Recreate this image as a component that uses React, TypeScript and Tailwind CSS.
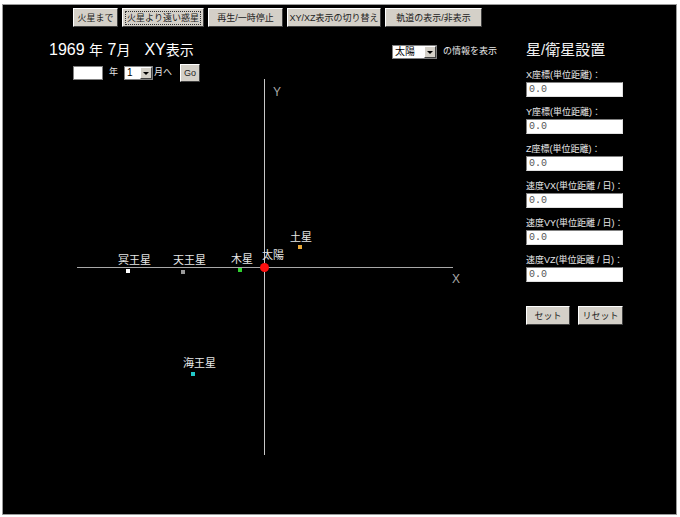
const jp = '[font-family:"Liberation_Sans","Noto_Sans_CJK_JP",sans-serif]'

type Body = {
  name: string
  dot: string
  x: number
  y: number
  lx: number
  ly: number
}

// canvas coords: origin = left column top-left (page x 3, y 82)
const bodies: Body[] = [
  { name: '冥王星', dot: 'bg-white', x: 123, y: 187, lx: 115, ly: 172 },
  { name: '天王星', dot: 'bg-[#9a9a9a]', x: 178, y: 188, lx: 170, ly: 172 },
  { name: '木星', dot: 'bg-[#2fd02f]', x: 235, y: 186, lx: 228, ly: 171 },
  { name: '土星', dot: 'bg-[#e8a838]', x: 295, y: 163, lx: 287, ly: 149 },
  { name: '海王星', dot: 'bg-[#22c8c8]', x: 188, y: 290, lx: 180, ly: 275 },
]

const fields = [
  'X座標(単位距離)：',
  'Y座標(単位距離)：',
  'Z座標(単位距離)：',
  '速度VX(単位距離 / 日)：',
  '速度VY(単位距離 / 日)：',
  '速度VZ(単位距離 / 日)：',
]

function WinButton({
  label,
  w,
  h = 19,
  focused,
}: {
  label: string
  w: number
  h?: number
  focused?: boolean
}) {
  return (
    <div
      className={`flex shrink-0 items-center justify-center whitespace-nowrap border border-t-white border-l-white border-r-[#404040] border-b-[#404040] bg-[#d4d0c8] text-[9px] text-[#222] ${jp}`}
      style={{ width: w, height: h }}
    >
      <span
        className={
          focused ? 'border border-dotted border-[#333] px-[1px] leading-[12px]' : 'leading-[12px]'
        }
      >
        {label}
      </span>
    </div>
  )
}

function FakeSelect({ value, w }: { value: string; w: number }) {
  return (
    <div
      className={`flex h-[14px] shrink-0 items-stretch border border-[#808080] bg-white text-[10px] text-black ${jp}`}
      style={{ width: w }}
    >
      <span className="flex-1 pl-[2px] leading-[12px]">{value}</span>
      <span className="flex w-[12px] items-center justify-center border border-t-white border-l-white border-r-[#404040] border-b-[#404040] bg-[#d4d0c8]">
        <span className="h-0 w-0 border-x-[3px] border-t-[3px] border-x-transparent border-t-black" />
      </span>
    </div>
  )
}

function Field({ label }: { label: string }) {
  return (
    <div className="mt-[8px] flex flex-col first:mt-[5px]">
      <span className={`h-[14px] whitespace-nowrap text-[9px] leading-[14px] text-[#e8e8e8] ${jp}`}>
        {label}
      </span>
      <div className="flex h-[15px] w-[97px] items-center border border-[#808080] border-r-[#e0e0e0] border-b-[#e0e0e0] bg-white pl-[2px] font-['Liberation_Mono',monospace] text-[10px] text-[#555]">
        0.0
      </div>
    </div>
  )
}

export default function App() {
  return (
    <div className="h-[517px] w-[680px] overflow-hidden bg-white pl-[2px] pt-[4px]">
      <div className="h-[511px] w-[675px] border border-[#9a9a9a] bg-black">
        {/* top toolbar */}
        <div className="flex gap-[4px] pl-[70px] pt-[3px]">
          <WinButton label="火星まで" w={45} />
          <WinButton label="火星より遠い惑星" w={82} focused />
          <WinButton label="再生/一時停止" w={75} />
          <WinButton label="XY/XZ表示の切り替え" w={94} />
          <WinButton label="軌道の表示/非表示" w={97} />
        </div>

        <div className="flex">
          {/* left: date + orbit view */}
          <div className="w-[523px] shrink-0">
            <div className="mt-[13px] flex h-[20px] items-start pl-[46px]">
              <span
                className={`w-[343px] whitespace-nowrap text-[16px] leading-[20px] text-white ${jp}`}
              >
                1969 <span className="text-[14px]">年</span> 7<span className="text-[14px]">月　</span>XY
                <span className="text-[14px]">表示</span>
              </span>
              <div className="mt-[5px] flex items-center">
                <FakeSelect value="太陽" w={45} />
                <span className={`ml-[6px] text-[9px] text-[#e8e8e8] ${jp}`}>の情報を表示</span>
              </div>
            </div>

            <div className={`mt-[4px] flex h-[18px] items-center pl-[70px] text-[9px] text-[#e8e8e8] ${jp}`}>
              <div className="h-[14px] w-[30px] border border-[#808080] bg-white" />
              <span className="ml-[6px]">年</span>
              <div className="ml-[6px]">
                <FakeSelect value="1" w={29} />
              </div>
              <span className="ml-[1px]">月へ</span>
              <div className="ml-[8px]">
                <WinButton label="Go" w={20} h={18} />
              </div>
            </div>

            {/* orbit canvas */}
            <div className="relative h-[380px]">
              <div className="absolute left-[261px] top-[-3px] h-[376px] w-px bg-[#c8c8c8]" />
              <div className="absolute left-[74px] top-[185px] h-px w-[376px] bg-[#a8a8a8]" />
              <span className="absolute left-[270px] top-[1px] font-['Liberation_Sans',sans-serif] text-[12px] text-[#a8a8a8]">
                Y
              </span>
              <span className="absolute left-[449px] top-[188px] font-['Liberation_Sans',sans-serif] text-[12px] text-[#a8a8a8]">
                X
              </span>

              <div className="absolute left-[257px] top-[181px] h-[9px] w-[9px] rounded-full bg-[#ff1010]" />
              <span className={`absolute left-[259px] top-[167px] text-[11px] leading-[12px] text-[#e8e8e8] ${jp}`}>
                太陽
              </span>

              {bodies.map((b) => (
                <div key={b.name}>
                  <div
                    className={`absolute h-[4px] w-[4px] ${b.dot}`}
                    style={{ left: b.x, top: b.y }}
                  />
                  <span
                    className={`absolute text-[11px] leading-[12px] text-[#e8e8e8] ${jp}`}
                    style={{ left: b.lx, top: b.ly }}
                  >
                    {b.name}
                  </span>
                </div>
              ))}
            </div>
          </div>

          {/* right: body placement form */}
          <div className="flex flex-col pt-[13px]">
            <span className={`h-[20px] text-[15px] leading-[20px] text-[#f0f0f0] ${jp}`}>
              星/衛星設置
            </span>
            {fields.map((f) => (
              <Field key={f} label={f} />
            ))}
            <div className="mt-[24px] flex gap-[8px]">
              <WinButton label="セット" w={44} />
              <WinButton label="リセット" w={45} />
            </div>
          </div>
        </div>
      </div>
    </div>
  )
}
